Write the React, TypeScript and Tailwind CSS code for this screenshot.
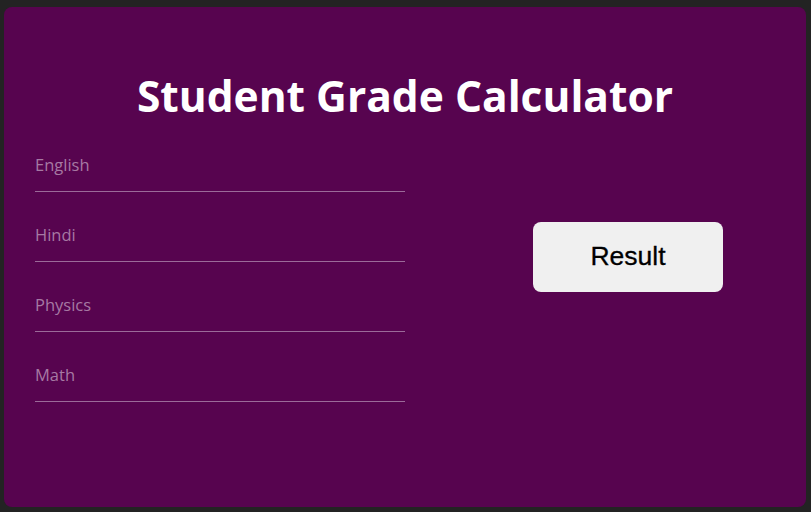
const subjects = ["English", "Hindi", "Physics", "Math"];

export default function App() {
  return (
    <div className="min-h-screen bg-[#232323] pt-[7px] pl-[4px] pr-[5px] pb-[5px]">
      <div className="h-[500px] rounded-[8px] bg-[#57044f] font-['Comic_Sans_MS','Open_Sans',sans-serif]">
        <h1 className="h-[135px] pt-[59px] text-center text-[42.5px] leading-[60px] font-bold text-white">
          Student Grade Calculator
        </h1>
        <div className="flex">
          <div className="flex w-[401px] flex-col gap-[20px] pl-[31px]">
            {subjects.map((s) => (
              <input
                key={s}
                type="text"
                placeholder={s}
                className="block h-[50px] w-[370px] border-b border-[#9b6b99] bg-transparent pb-[4px] text-[16.5px] font-medium text-white outline-none placeholder:text-[#a679a3]"
              />
            ))}
          </div>
          <div>
            <button className="ml-[128px] mt-[80px] h-[70px] w-[190px] rounded-[8px] bg-[#f0f0f0] font-['Liberation_Sans',Arial,sans-serif] text-[26.5px] text-black [-webkit-text-stroke:0.3px_black]">
              Result
            </button>
          </div>
        </div>
      </div>
    </div>
  );
}
